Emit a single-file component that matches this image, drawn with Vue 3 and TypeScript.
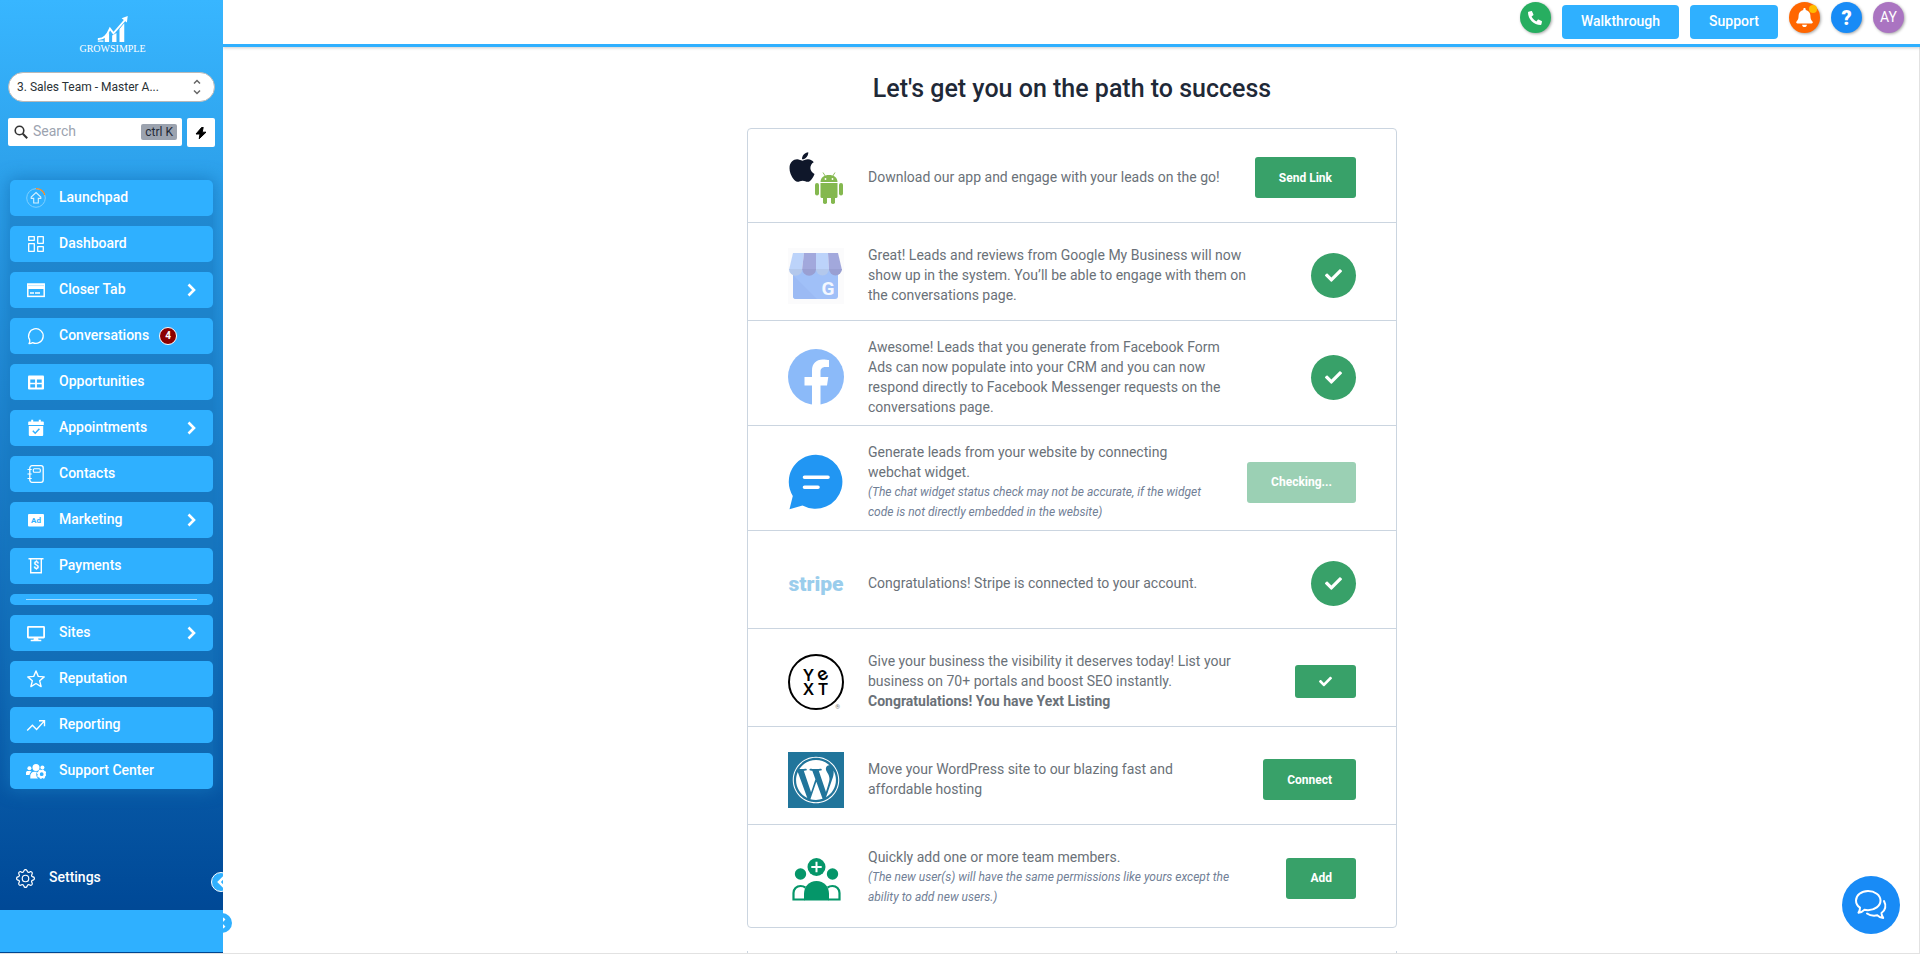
<script setup lang="ts">
import { ref } from 'vue'

interface NavItem {
  label: string
  icon: string
  expandable?: boolean
  badge?: number
}

interface Step {
  id: string
  lines: string[]
  note?: string
  strong?: string
  action: 'button' | 'done' | 'tick'
  label?: string
  busy?: boolean
}

const search = ref('')
const account = ref('master')

const primaryNav: NavItem[] = [
  {
    label: 'Launchpad',
    icon: '<circle cx="10" cy="10" r="9.3" stroke="#7fd0ff" stroke-width="1"/><path d="M10 .7A9.3 9.3 0 0 1 18.8 7" stroke="#ff8a1f" stroke-width="1.2"/><path d="M10 4.5 14.8 9v1.4h-2.5V15H7.700v-4.600H5.200V9z" stroke="#d5f0ff" stroke-width="1.100"/>',
  },
  {
    label: 'Dashboard',
    icon: '<path d="M2.700 2.700h5.600v3.600H2.700zM11.700 2.700h5.600v6.600h-5.600zM2.700 9.700h5.600v7.600H2.700zM11.700 12.700h5.600v4.600h-5.600z" stroke="#fff" stroke-width="1.300" stroke-linejoin="round"/>',
  },
  {
    label: 'Closer Tab',
    expandable: true,
    icon: '<rect x="1.800" y="4" width="16.400" height="12.400" stroke="#fff" stroke-width="1.500"/><path d="M1.500 4h17v5h-17z" fill="#fff"/><path d="M2 5.600h16" stroke="#8ed4ff" stroke-width=".6"/><path d="M4 13h4M9 13h5" stroke="#fff" stroke-width="1.500"/>',
  },
  {
    label: 'Conversations',
    badge: 4,
    icon: '<path d="M3 17.500c.9-1 1.100-2 .7-3.600a7.300 7.300 0 1 1 3 2.700c-1.300.7-2.400 1-3.700.9z" stroke="#fff" stroke-width="1.300" stroke-linejoin="round"/>',
  },
  {
    label: 'Opportunities',
    icon: '<rect x="2" y="3.500" width="16" height="14" rx="1" fill="#fff"/><path d="M4.300 7.500h4.800v3.200H4.300zM10.900 7.500h4.800v3.200h-4.800zM4.300 12.300h4.800v3.200H4.300zM10.900 12.300h4.800v3.200h-4.800z" fill="#2fb0ff"/>',
  },
  {
    label: 'Appointments',
    expandable: true,
    icon: '<path d="M3 3.500h14a.8.8 0 0 1 .8.800V7H2.200V4.300a.8.8 0 0 1 .8-.8zM2.800 8h14.400v9a1 1 0 0 1-1 1H3.800a1 1 0 0 1-1-1z" fill="#fff"/><path d="M6.200 1.800v3M13.800 1.800v3" stroke="#fff" stroke-width="2"/><path d="m6.800 12.800 2.400 2.400 4.200-4.400" stroke="#2fb0ff" stroke-width="1.500"/>',
  },
  {
    label: 'Contacts',
    icon: '<rect x="3.800" y="1.700" width="13.400" height="16.600" rx="2.200" stroke="#fff" stroke-width="1.300"/><rect x="7.300" y="4.800" width="7" height="3.400" rx="1" stroke="#fff" stroke-width="1.100"/><path d="M1.500 5.500h4.200M1.500 10h4.200M1.500 14.500h4.200" stroke="#fff" stroke-width="1.200"/>',
  },
  {
    label: 'Marketing',
    expandable: true,
    icon: '<rect x="2" y="4" width="16" height="12.500" rx="1" fill="#fff"/><text x="10" y="13.300" text-anchor="middle" font-family="Roboto, sans-serif" font-size="8" font-weight="700" fill="#2fb0ff">Ad</text>',
  },
  {
    label: 'Payments',
    icon: '<path d="M2.500 2.800h15M4.700 2.800v14h10.600v-14" stroke="#fff" stroke-width="1.400"/><text x="10" y="13.400" text-anchor="middle" font-family="Roboto, sans-serif" font-size="10" font-weight="700" fill="#fff">$</text>',
  },
]

const secondaryNav: NavItem[] = [
  {
    label: 'Sites',
    expandable: true,
    icon: '<rect x="1.900" y="3.900" width="16.200" height="10.600" rx=".5" stroke="#fff" stroke-width="1.800"/><path d="M8 14.500h4l.5 2.300h2.800v1.500H4.700v-1.500h2.800z" fill="#fff"/>',
  },
  {
    label: 'Reputation',
    icon: '<path d="m10 1.900 2.300 5.500 5.900.5-4.500 3.900 1.400 5.800L10 14.500l-5.100 3.100 1.400-5.800L1.800 7.900l5.900-.5z" stroke="#fff" stroke-width="1.400" stroke-linejoin="round"/>',
  },
  {
    label: 'Reporting',
    icon: '<path d="m1.200 15.500 5.200-5.200 4.200 4.200 7.600-8.400M13 5.700h5.500v5.500" stroke="#fff" stroke-width="1.400"/>',
  },
  {
    label: 'Support Center',
    icon: '<circle cx="3.400" cy="7.200" r="2" fill="#fff"/><circle cx="10" cy="6.400" r="3.500" fill="#fff"/><circle cx="16.400" cy="6.600" r="2" fill="#fff"/><path d="M0 14v-2.300C0 10.700.8 10 1.800 10H4c.7 0 1.200.2 1.500.6A5.500 5.500 0 0 0 3.400 14zM4.300 17.500v-2.700c0-2.300 1.700-4 4-4H11c-1.200 2-1 4.800 1 6.700z" fill="#fff"/><circle cx="15.700" cy="13.200" r="3" stroke="#fff" stroke-width="2.200"/><circle cx="15.700" cy="13.200" r="4.200" stroke="#fff" stroke-width="1.300" stroke-dasharray="1.700 1.600"/>',
  },
]

const steps: Step[] = [
  { id: 'app', lines: ['Download our app and engage with your leads on the go!'], action: 'button', label: 'Send Link' },
  {
    id: 'google',
    lines: ['Great! Leads and reviews from Google My Business will now show up in the system. You’ll be able to engage with them on the conversations page.'],
    action: 'done',
  },
  {
    id: 'facebook',
    lines: ['Awesome! Leads that you generate from Facebook Form Ads can now populate into your CRM and you can now respond directly to Facebook Messenger requests on the conversations page.'],
    action: 'done',
  },
  {
    id: 'chat',
    lines: ['Generate leads from your website by connecting webchat widget.'],
    note: '(The chat widget status check may not be accurate, if the widget code is not directly embedded in the website)',
    action: 'button',
    label: 'Checking...',
    busy: true,
  },
  { id: 'stripe', lines: ['Congratulations! Stripe is connected to your account.'], action: 'done' },
  {
    id: 'yext',
    lines: ['Give your business the visibility it deserves today! List your business on 70+ portals and boost SEO instantly.'],
    strong: 'Congratulations! You have Yext Listing',
    action: 'tick',
  },
  { id: 'wordpress', lines: ['Move your WordPress site to our blazing fast and affordable hosting'], action: 'button', label: 'Connect' },
  {
    id: 'team',
    lines: ['Quickly add one or more team members.'],
    note: '(The new user(s) will have the same permissions like yours except the ability to add new users.)',
    action: 'button',
    label: 'Add',
  },
]

const checkPath =
  'M173.898 439.404l-166.4-166.4c-9.997-9.997-9.997-26.206 0-36.204l36.203-36.204c9.997-9.998 26.207-9.998 36.204 0L192 312.69 432.095 72.596c9.997-9.997 26.207-9.997 36.204 0l36.203 36.204c9.997 9.997 9.997 26.206 0 36.204l-294.4 294.401c-9.998 9.997-26.207 9.997-36.204-.001z'
</script>

<template>
  <div class="shell">
    <aside class="sidebar">
      <div class="logo">
        <svg width="36" height="30" viewBox="0 0 36 30" fill="none" aria-hidden="true">
          <path d="M8.500 24.500 13.500 19v11h-5zM17 22.500l5-3V30h-5zM25.500 15l5.500-6.500V30h-5.500z" fill="#fff" />
          <path d="M.5 29h6.500" stroke="#fff" stroke-width="1.500" />
          <path d="M.5 26.500c7 .5 10.500-4 14-12L18.500 20 32.500 4" stroke="#fff" stroke-width="2.200" />
          <path d="m28 2.500 7-2.500-1 7.500z" fill="#fff" />
        </svg>
        <span class="logo-name">GROWSIMPLE</span>
      </div>

      <div class="account">
        <select v-model="account" aria-label="Account">
          <option value="master">3. Sales Team - Master A...</option>
        </select>
        <svg width="10" height="16" viewBox="0 0 10 16" fill="none" stroke="#666" stroke-width="1.500" aria-hidden="true">
          <path d="m2 4.500 3-3 3 3M2 11.500l3 3 3-3" />
        </svg>
      </div>

      <div class="search-row">
        <label class="search">
          <svg width="14" height="14" viewBox="0 0 14 14" fill="none" stroke="#333" stroke-width="1.600" aria-hidden="true">
            <circle cx="5.500" cy="5.500" r="4.300" />
            <path d="m8.800 8.800 4.400 4.400" stroke-width="2" />
          </svg>
          <input v-model="search" type="text" placeholder="Search" aria-label="Search" />
          <kbd>ctrl K</kbd>
        </label>
        <button class="quick" type="button" aria-label="Quick actions">
          <svg width="12" height="12" viewBox="0 0 12 12" aria-hidden="true">
            <path d="M6.800.3 1 7h4l-.8 4.800L11 5.200H7.200L8.200.3z" fill="#000" stroke="#000" stroke-linejoin="round" />
          </svg>
        </button>
      </div>

      <nav class="nav">
        <a v-for="item in primaryNav" :key="item.label" href="#" class="nav-item">
          <svg class="nav-icon" viewBox="0 0 20 20" fill="none" aria-hidden="true" v-html="item.icon"></svg>
          <span class="nav-label">{{ item.label }}</span>
          <span v-if="item.badge" class="badge">{{ item.badge }}</span>
          <svg v-if="item.expandable" class="chevron" viewBox="0 0 9 14" aria-hidden="true">
            <path d="m1.500 1.500 5.500 5.500-5.500 5.500" fill="none" stroke="#fff" stroke-width="2.600" />
          </svg>
        </a>
        <div class="nav-rule"><hr /></div>
        <a v-for="item in secondaryNav" :key="item.label" href="#" class="nav-item">
          <svg class="nav-icon" viewBox="0 0 20 20" fill="none" aria-hidden="true" v-html="item.icon"></svg>
          <span class="nav-label">{{ item.label }}</span>
          <svg v-if="item.expandable" class="chevron" viewBox="0 0 9 14" aria-hidden="true">
            <path d="m1.500 1.500 5.500 5.500-5.500 5.500" fill="none" stroke="#fff" stroke-width="2.600" />
          </svg>
        </a>
      </nav>

      <a href="#" class="settings">
        <svg width="19" height="19" viewBox="0 0 16 16" fill="#fff" aria-hidden="true">
          <path d="M8 4.754a3.246 3.246 0 1 0 0 6.492 3.246 3.246 0 0 0 0-6.492zM5.754 8a2.246 2.246 0 1 1 4.492 0 2.246 2.246 0 0 1-4.492 0z" />
          <path d="M9.796 1.343c-.527-1.790-3.065-1.790-3.592 0l-.094.319a.873.873 0 0 1-1.255.52l-.292-.16c-1.640-.892-3.433.902-2.540 2.541l.159.292a.873.873 0 0 1-.52 1.255l-.319.094c-1.790.527-1.790 3.065 0 3.592l.319.094a.873.873 0 0 1 .52 1.255l-.16.292c-.892 1.640.901 3.434 2.541 2.540l.292-.159a.873.873 0 0 1 1.255.52l.094.319c.527 1.790 3.065 1.790 3.592 0l.094-.319a.873.873 0 0 1 1.255-.52l.292.16c1.640.893 3.434-.902 2.540-2.541l-.159-.292a.873.873 0 0 1 .52-1.255l.319-.094c1.790-.527 1.790-3.065 0-3.592l-.319-.094a.873.873 0 0 1-.52-1.255l.16-.292c.893-1.640-.902-3.433-2.541-2.540l-.292.159a.873.873 0 0 1-1.255-.52l-.094-.319zm-2.633.283c.246-.835 1.428-.835 1.674 0l.094.319a1.873 1.873 0 0 0 2.693 1.115l.291-.16c.764-.415 1.600.42 1.184 1.185l-.159.292a1.873 1.873 0 0 0 1.116 2.692l.318.094c.835.246.835 1.428 0 1.674l-.319.094a1.873 1.873 0 0 0-1.115 2.693l.16.291c.415.764-.42 1.600-1.185 1.184l-.291-.159a1.873 1.873 0 0 0-2.693 1.116l-.094.318c-.246.835-1.428.835-1.674 0l-.094-.319a1.873 1.873 0 0 0-2.692-1.115l-.292.16c-.764.415-1.600-.42-1.184-1.185l.159-.291A1.873 1.873 0 0 0 1.945 8.930l-.319-.094c-.835-.246-.835-1.428 0-1.674l.319-.094A1.873 1.873 0 0 0 3.060 4.377l-.16-.292c-.415-.764.42-1.600 1.185-1.184l.292.159a1.873 1.873 0 0 0 2.692-1.115l.094-.319z" />
        </svg>
        <span class="nav-label">Settings</span>
      </a>
      <div class="sidebar-foot"></div>
      <button class="collapse" type="button" aria-label="Collapse menu">
        <svg width="9" height="14" viewBox="0 0 9 14" aria-hidden="true">
          <path d="M7.500 1.500 2 7l5.500 5.500" fill="none" stroke="#fff" stroke-width="2.600" />
        </svg>
      </button>
    </aside>

    <button class="edge-toggle" type="button" aria-label="Toggle menu">
      <svg width="8" height="12" viewBox="0 0 8 12" aria-hidden="true">
        <path d="M6.500 1.500 2 6l4.500 4.500" fill="none" stroke="#fff" stroke-width="2.600" />
      </svg>
    </button>

    <div class="content">
      <header class="topbar">
        <button class="round phone" type="button" aria-label="Call">
          <svg width="14" height="14" viewBox="0 0 512 512" aria-hidden="true">
            <g transform="translate(512 0) scale(-1 1)">
              <path fill="#fff" d="M493.400 24.600l-104-24c-11.300-2.600-22.900 3.300-27.500 13.900l-48 112c-4.200 9.800-1.400 21.300 6.900 28l60.600 49.600c-36 76.700-98.900 140.500-177.200 177.200l-49.600-60.600c-6.800-8.300-18.200-11.100-28-6.900l-112 48C3.900 366.500-2 378.100.6 389.400l24 104C27.100 504.200 36.700 512 48 512c256.100 0 464-207.500 464-464 0-11.200-7.700-20.900-18.600-23.400z" />
            </g>
          </svg>
        </button>
        <button class="pill" type="button">Walkthrough</button>
        <button class="pill" type="button">Support</button>
        <button class="round bell" type="button" aria-label="Notifications">
          <svg width="17" height="19" viewBox="0 0 448 512" aria-hidden="true">
            <path fill="#fff" d="M224 512c35.320 0 63.970-28.650 63.970-64H160.030c0 35.350 28.650 64 63.970 64zm215.390-149.710c-19.320-20.760-55.470-51.990-55.470-154.290 0-77.700-54.480-139.900-127.940-155.160V32c0-17.670-14.320-32-31.980-32s-31.980 14.330-31.980 32v20.840C118.560 68.100 64.080 130.300 64.080 208c0 102.300-36.150 133.530-55.470 154.290-6 6.450-8.660 14.160-8.610 21.710.11 16.400 12.980 32 32.100 32h383.800c19.120 0 32-15.600 32.100-32 .05-7.550-2.610-15.270-8.610-21.710z" />
          </svg>
          <span class="dot"></span>
        </button>
        <button class="round help" type="button" aria-label="Help">?</button>
        <button class="round avatar" type="button" aria-label="Profile">AY</button>
      </header>

      <main class="main">
        <h1>Let's get you on the path to success</h1>
        <ul class="card">
          <li v-for="step in steps" :key="step.id" class="step">
            <svg v-if="step.id === 'app'" class="art" viewBox="0 0 56 56" aria-hidden="true">
              <svg x="0" y="0" width="28" height="34" viewBox="0 0 384 512">
                <path fill="#0f172a" d="M318.700 268.700c-.2-36.700 16.400-64.400 50-84.800-18.800-26.900-47.200-41.700-84.700-44.600-35.500-2.800-74.300 20.700-88.500 20.700-15 0-49.400-19.700-76.400-19.700C63.300 141.200 4 184.800 4 273.500q0 39.300 14.400 81.200c12.800 36.700 59 126.700 107.200 125.200 25.200-.6 43-17.900 75.800-17.900 31.800 0 48.300 17.900 76.400 17.900 48.600-.7 90.400-82.500 102.600-119.300-65.200-30.700-61.700-90-61.700-91.900zm-56.600-164.200c27.300-32.400 24.800-61.900 24-72.500-24.100 1.400-52 16.400-67.900 34.900-17.500 19.800-27.800 44.300-25.600 71.900 26.100 2 49.900-11.400 69.500-34.300z" />
              </svg>
              <g fill="#84b84f">
                <path d="M32.500 32c0-4.500 3.800-7 8.500-7s8.500 2.500 8.500 7z" />
                <path d="m35 22.500 2.500 4M47 22.500l-2.500 4" stroke="#84b84f" stroke-width=".9" />
                <path d="M32.500 33h17v13.500a1.500 1.500 0 0 1-1.500 1.500H34a1.500 1.500 0 0 1-1.500-1.500z" />
                <rect x="27" y="33" width="4" height="12.500" rx="2" />
                <rect x="51" y="33" width="4" height="12.500" rx="2" />
                <rect x="35" y="44" width="4" height="10" rx="1.800" />
                <rect x="43" y="44" width="4" height="10" rx="1.800" />
              </g>
              <circle cx="37.500" cy="29" r=".9" fill="#fff" />
              <circle cx="44.500" cy="29" r=".9" fill="#fff" />
            </svg>

            <svg v-else-if="step.id === 'google'" class="art" viewBox="0 0 56 56" aria-hidden="true">
              <rect width="56" height="56" fill="#fbfbfc" />
              <path d="M5 22h45v26a3 3 0 0 1-3 3H8a3 3 0 0 1-3-3z" fill="#a0c0f8" />
              <path d="M5 27 29 51H8a3 3 0 0 1-3-3z" fill="#9bbaf4" />
              <path d="M5 5h11l-2 17H1z" fill="#bcd3fa" />
              <path d="M16 5h12v17H14z" fill="#a2a8dc" />
              <path d="M28 5h12l1 17H28z" fill="#bcd3fa" />
              <path d="M40 5h10l4 17H41z" fill="#a2a8dc" />
              <path d="M1 21h13.300a6.600 6.600 0 0 1-13.300 0z" fill="#b3c8ec" />
              <path d="M14.300 21H28a6.800 6.800 0 0 1-13.700 0z" fill="#999fd2" />
              <path d="M28 21h13a6.500 6.500 0 0 1-13 0z" fill="#b3c8ec" />
              <path d="M41 21h13a6.500 6.500 0 0 1-13 0z" fill="#999fd2" />
              <text x="40" y="47" text-anchor="middle" font-family="Roboto, sans-serif" font-size="19" font-weight="700" fill="#f4f8ff">G</text>
            </svg>

            <svg v-else-if="step.id === 'facebook'" class="art" viewBox="0 0 56 56" aria-hidden="true">
              <circle cx="28" cy="28" r="28" fill="#8bbaf9" />
              <path d="M24 56V36.500h-7.500V28H24v-6.500c0-7 4.200-11 10.700-11 3 0 6.300.6 6.300.6v7h-3.600c-3.500 0-4.900 2.200-4.900 4.500V28h7.800l-1.300 8.500h-6.500V56z" fill="#fff" />
            </svg>

            <svg v-else-if="step.id === 'chat'" class="art" viewBox="0 0 56 56" aria-hidden="true">
              <path d="M28 .8a27 27 0 1 1-13.500 50.700L1.500 55.300 4.800 42A27 27 0 0 1 28 .8z" fill="#2196f3" />
              <path d="M16.500 23.300h23.500M16.500 33.300h13.500" stroke="#fff" stroke-width="3.600" stroke-linecap="round" />
            </svg>

            <svg v-else-if="step.id === 'stripe'" class="art" viewBox="0 0 56 56" aria-hidden="true">
              <text x="28" y="35" text-anchor="middle" font-family="Roboto, sans-serif" font-size="21" font-weight="900" fill="#9acdec">stripe</text>
            </svg>

            <svg v-else-if="step.id === 'yext'" class="art" viewBox="0 0 56 56" aria-hidden="true">
              <circle cx="28" cy="28" r="27" fill="none" stroke="#000" stroke-width="2" />
              <g font-family="Inter, Roboto, sans-serif" font-weight="600" font-size="16" text-anchor="middle">
                <text x="20.500" y="26.500">Y</text>
                <text x="34.500" y="26" font-size="18" transform="rotate(-30 34.500 21)">e</text>
                <text x="20.500" y="41">X</text>
                <text x="35" y="41">T</text>
              </g>
              <text x="49.500" y="55" text-anchor="middle" font-family="Roboto, sans-serif" font-size="6" fill="#777">®</text>
            </svg>

            <svg v-else-if="step.id === 'wordpress'" class="art" viewBox="0 0 56 56" aria-hidden="true">
              <rect width="56" height="56" fill="#21759b" />
              <svg x="4" y="4" width="48" height="48" viewBox="0 0 512 512">
                <path fill="#fff" d="M61.700 169.400l101.500 278C92.200 413 43.300 340.200 43.300 256c0-30.900 6.600-60.100 18.400-86.600zm337.900 75.900c0-26.300-9.400-44.500-17.500-58.700-10.800-17.500-20.900-32.400-20.900-49.900 0-19.600 14.800-37.800 35.700-37.800.9 0 1.800.1 2.800.2-37.900-34.700-88.300-55.900-143.700-55.900-74.300 0-139.700 38.100-177.800 95.900 5 .2 9.700.3 13.700.3 22.200 0 56.700-2.700 56.700-2.700 11.500-.7 12.800 16.200 1.400 17.500 0 0-11.500 1.300-24.300 2l77.500 230.400L249.800 247l-33.100-90.800c-11.500-.7-22.300-2-22.300-2-11.500-.7-10.100-18.200 1.300-17.500 0 0 35.100 2.700 56 2.700 22.200 0 56.700-2.700 56.700-2.700 11.500-.7 12.800 16.200 1.400 17.500 0 0-11.500 1.300-24.300 2l76.900 228.700 21.200-70.900c9-29.400 16-50.500 16-68.700zm-139.900 29.300l-63.800 185.500c19.100 5.600 39.200 8.700 60.100 8.700 24.800 0 48.500-4.300 70.600-12.100-.6-.9-1.100-1.900-1.500-2.900l-65.400-179.200zm183-120.700c.9 6.800 1.400 14 1.400 21.900 0 21.600-4 45.800-16.200 76.200l-65 187.900C426.200 403 468.700 334.500 468.700 256c0-37-9.400-71.800-26-102.100zM504 256c0 136.800-111.300 248-248 248C119.200 504 8 392.700 8 256 8 119.200 119.200 8 256 8c136.700 0 248 111.200 248 248zm-11.400 0c0-130.500-106.200-236.600-236.600-236.600C125.500 19.400 19.400 125.500 19.400 256S125.600 492.600 256 492.600c130.500 0 236.600-106.100 236.600-236.600z" />
              </svg>
            </svg>

            <svg v-else class="art" viewBox="0 0 56 56" aria-hidden="true">
              <g fill="#059669">
                <circle cx="28.500" cy="17" r="9" />
                <circle cx="12.500" cy="24" r="5.700" />
                <circle cx="44.500" cy="24" r="5.700" />
                <path d="M16 50.500V44c0-7.500 5-13 12.500-13S41 36.500 41 44v6.500z" />
              </g>
              <path d="M28.500 11.800v10.400M23.300 17h10.400" stroke="#fff" stroke-width="2" />
              <path d="M16.500 49.500H5.500V43c0-4 3-7 7-7 2 0 3.700.6 5 1.700M40.500 49.500h11V43c0-4-3-7-7-7-2 0-3.700.6-5 1.700" fill="none" stroke="#059669" stroke-width="2.200" />
            </svg>

            <div class="text">
              <p v-for="line in step.lines" :key="line">{{ line }}</p>
              <p v-if="step.note" class="note">{{ step.note }}</p>
              <p v-if="step.strong" class="strong">{{ step.strong }}</p>
            </div>

            <button v-if="step.action === 'button'" type="button" class="action" :disabled="step.busy">{{ step.label }}</button>
            <button v-else-if="step.action === 'tick'" type="button" class="action tick" aria-label="Listing active">
              <svg width="13" height="13" viewBox="0 0 512 512" aria-hidden="true"><path fill="#fff" :d="checkPath" /></svg>
            </button>
            <span v-else class="done" role="img" aria-label="Connected">
              <svg width="17" height="17" viewBox="0 0 512 512" aria-hidden="true"><path fill="#fff" :d="checkPath" /></svg>
            </span>
          </li>
        </ul>
        <div class="next-card"></div>
      </main>
    </div>

    <button class="fab" type="button" aria-label="Open chat">
      <svg width="34" height="32" viewBox="0 0 34 32" fill="none" stroke="#fff" stroke-width="2" stroke-linecap="round" stroke-linejoin="round" aria-hidden="true">
        <path d="M14 2C7.300 2 2 6.200 2 11.500c0 3 1.500 5.500 4 7.200 0 2-.5 3.600-1.500 5 2.400-.2 4.300-1.200 5.800-2.900 1.200.3 2.400.4 3.700.4 6.700 0 12.500-4.200 12.500-9.700S20.700 2 14 2z" />
        <path d="M30 12c2.500 4.500 1.500 9.500-2.500 12 0 2 .6 3.400 1.700 4.900-2.600-.2-4.300-1-5.700-2.600-4 .8-7.700.2-10.500-1.800" />
      </svg>
    </button>
  </div>
</template>

<style>
html,
body {
  margin: 0;
  background: #fff;
}
</style>

<style scoped>
*,
*::before,
*::after {
  box-sizing: border-box;
}

.shell {
  position: relative;
  display: flex;
  height: 100vh;
  overflow: hidden;
  font-family: Roboto, 'Liberation Sans', sans-serif;
  border-bottom: 1px solid #e2e2e2;
}

button,
input,
select {
  font-family: inherit;
  margin: 0;
}

button {
  border: 0;
  padding: 0;
  cursor: pointer;
}

a {
  color: inherit;
  text-decoration: none;
}

.sidebar {
  position: relative;
  z-index: 1;
  flex: 0 0 223px;
  display: flex;
  flex-direction: column;
  height: 100vh;
  padding-top: 16px;
  overflow: hidden;
  color: #fff;
  background: linear-gradient(180deg, #38b6ff 0%, #004a98 94%, #00458e 100%);
}

.logo {
  display: flex;
  flex-direction: column;
  align-items: center;
  height: 40px;
  padding-left: 2px;
}

.logo-name {
  font-family: 'Liberation Serif', serif;
  font-size: 10px;
  line-height: 14px;
}

.account {
  position: relative;
  margin: 16px 8px 0;
}

.account select {
  display: block;
  width: 100%;
  height: 30px;
  padding: 0 36px 0 8px;
  border: 1px solid #b9b9b9;
  border-radius: 15px;
  background: #fff;
  color: #2a3135;
  font-size: 12px;
  appearance: none;
}

.account svg {
  position: absolute;
  top: 7px;
  right: 13px;
  pointer-events: none;
}

.search-row {
  display: flex;
  gap: 5px;
  margin: 16px 8px 0;
}

.search {
  flex: 1;
  display: flex;
  align-items: center;
  gap: 5px;
  min-width: 0;
  height: 28px;
  padding: 0 5px 0 6px;
  border-radius: 2px;
  background: #fff;
}

.search input {
  flex: 1;
  min-width: 0;
  padding: 0 0 2px;
  border: 0;
  outline: 0;
  background: none;
  color: #333;
  font-size: 14px;
}

.search input::placeholder {
  color: #9ca3af;
}

kbd {
  padding: 0 4px;
  border-radius: 2px;
  background: #9ca3af;
  color: #1f2937;
  font-family: inherit;
  font-size: 12px;
  line-height: 16px;
}

.quick {
  display: grid;
  place-items: center;
  width: 28px;
  height: 29px;
  border-radius: 2px;
  background: #fff;
}

.nav {
  display: flex;
  flex-direction: column;
  gap: 10px;
  margin: 33px 10px 0;
  border-radius: 5px;
  box-shadow: 0 0 16px 2px rgba(22, 118, 188, 0.7);
  background: rgba(22, 118, 188, 0.5);
}

.nav-item {
  display: flex;
  align-items: center;
  height: 36px;
  padding: 0 17px 0 16px;
  border-radius: 5px;
  background: #2fb0ff;
  font-size: 14px;
  font-weight: 500;
}

.nav-icon {
  flex: none;
  width: 20px;
  height: 20px;
  margin-right: 13px;
}

.nav-label {
  padding-bottom: 2px;
}

.chevron {
  width: 9px;
  height: 14px;
  margin-left: auto;
}

.badge {
  width: 18px;
  height: 18px;
  margin-left: 10px;
  border: 1px solid #fff;
  border-radius: 50%;
  background: #8b0000;
  font-size: 10px;
  font-weight: 700;
  line-height: 16px;
  text-align: center;
}

.nav-rule {
  padding: 5px 16px;
  border-radius: 5px;
  background: #2fb0ff;
}

.nav-rule hr {
  height: 1px;
  margin: 0;
  border: 0;
  background: #a9ddff;
}

.settings {
  display: flex;
  align-items: center;
  gap: 14px;
  height: 24px;
  margin: auto 0 20px 16px;
  font-size: 14px;
  font-weight: 500;
}

.sidebar-foot {
  height: 42px;
  margin-bottom: 2px;
  background: #2fb0ff;
}

.collapse,
.edge-toggle {
  position: absolute;
  display: grid;
  place-items: center;
  width: 20px;
  height: 20px;
  border-radius: 50%;
  background: #2fb0ff;
}

.collapse {
  right: -8px;
  bottom: 62px;
  border: 1px solid #fff;
}

.edge-toggle {
  left: 212px;
  bottom: 20px;
}

.content {
  flex: 1;
  display: flex;
  flex-direction: column;
  min-width: 0;
}

.topbar {
  position: relative;
  display: flex;
  justify-content: flex-end;
  gap: 11px;
  height: 47px;
  padding: 2px 16px 0 0;
  border-bottom: 3px solid #2fb0ff;
  box-shadow: 0 1px 3px rgba(0, 0, 0, 0.2);
}

.round {
  position: relative;
  display: grid;
  place-items: center;
  width: 31px;
  height: 31px;
  border-radius: 50%;
  color: #fff;
  box-shadow: 1px 1px 3px rgba(0, 0, 0, 0.35);
}

.phone {
  background: #27ae60;
}

.bell {
  background: #ff6600;
}

.help {
  background: #188bf6;
  font-size: 20px;
  font-weight: 900;
}

.avatar {
  padding-bottom: 2px;
  background: #aa74c1;
  font-size: 14px;
}

.dot {
  position: absolute;
  top: 3px;
  right: 3px;
  width: 8px;
  height: 8px;
  border-radius: 50%;
  background: #ffbc00;
}

.pill {
  height: 34px;
  margin-top: 3px;
  padding: 0 19px 2px;
  border-radius: 4px;
  background: #2fb0ff;
  color: #fff;
  font-size: 14px;
  font-weight: 500;
}

.main {
  flex: 1;
  min-height: 0;
  padding-left: 2px;
  overflow: hidden;
  border-right: 1px solid #e2e2e2;
}

h1 {
  margin: 28px 0 25px;
  color: #1f2937;
  font-size: 25px;
  font-weight: 500;
  line-height: 28px;
  text-align: center;
}

.card {
  max-width: 650px;
  margin: 0 auto;
  padding: 0;
  border: 1px solid #cbd5e0;
  border-radius: 4px;
  list-style: none;
}

.step {
  display: flex;
  align-items: center;
  gap: 24px;
  min-height: 98px;
  padding: 16px 40px 8px;
  border-bottom: 1px solid #cbd5e0;
}

.step:first-child {
  min-height: 94px;
  padding: 12px 40px 8px;
}

.step:last-child {
  min-height: 102px;
  padding: 12px 40px 8px;
  border-bottom: 0;
}

.art {
  flex: none;
  width: 56px;
  height: 56px;
}

.text {
  flex: 0 1 379px;
  padding-bottom: 2px;
  color: #6a7178;
  font-size: 14px;
  line-height: 20px;
}

.step:nth-child(3) .text,
.step:nth-child(4) .text {
  margin-bottom: -2px;
}

.text p {
  margin: 0;
}

.text .note {
  color: #718096;
  font-size: 12px;
  font-style: italic;
}

.text .strong {
  font-weight: 700;
}

.action {
  flex: none;
  height: 41px;
  margin-left: auto;
  padding: 0 24px;
  border-radius: 3px;
  background: #38a169;
  color: #fff;
  font-size: 12px;
  font-weight: 700;
}

.action:disabled {
  background: #9bd0b4;
}

.action.tick {
  display: flex;
  align-items: center;
  height: 33px;
}

.done {
  flex: none;
  display: grid;
  place-items: center;
  width: 45px;
  height: 45px;
  margin-left: auto;
  border-radius: 50%;
  background: #38a169;
}

.next-card {
  max-width: 650px;
  height: 94px;
  margin: 23px auto 0;
  border: 1px solid #cbd5e0;
  border-top: 0;
}

.fab {
  position: absolute;
  right: 20px;
  bottom: 19px;
  display: grid;
  place-items: center;
  width: 58px;
  height: 58px;
  border-radius: 50%;
  background: #188bf6;
}
</style>
